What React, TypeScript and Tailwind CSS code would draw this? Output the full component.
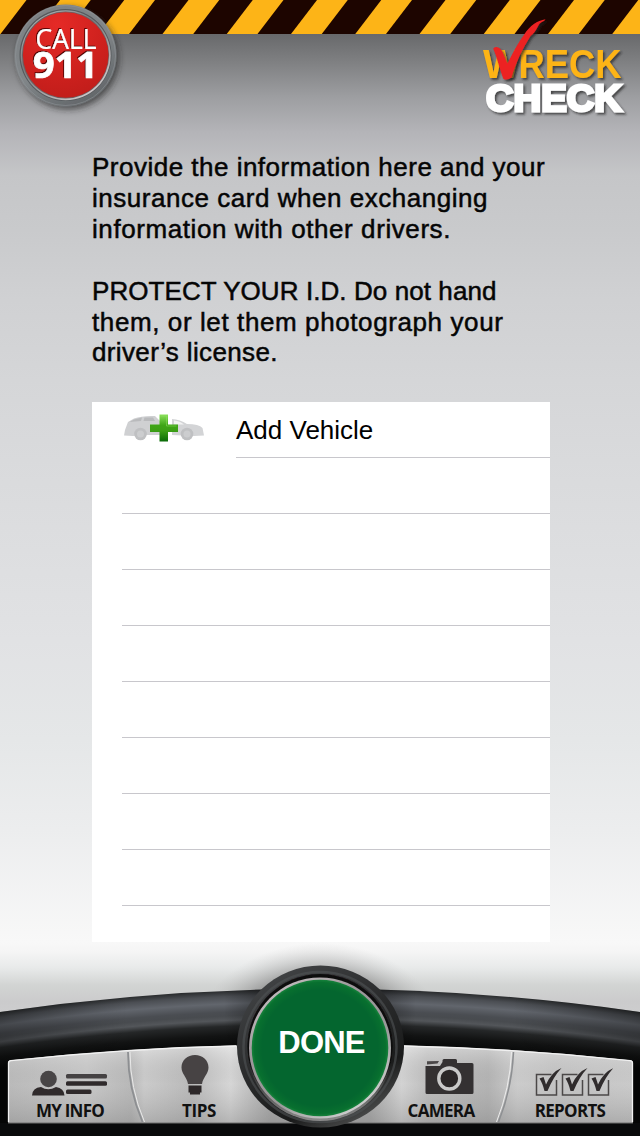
import type { ReactNode } from "react";

const stripes = Array.from({ length: 11 }, (_, i) => 0.5 + 64.25 * i);

function HazardTape() {
  return (
    <svg className="block h-[34px] w-full" viewBox="0 0 640 34" aria-hidden="true">
      <rect width="640" height="34" fill="#fdb417" />
      {stripes.map((x) => (
        <polygon key={x} points={`${x},34 ${x + 33.5},34 ${x + 59.5},0 ${x + 26},0`} fill="#1d0500" />
      ))}
    </svg>
  );
}

function EmergencyButton() {
  return (
    <button className="absolute left-1.5 top-0 h-[120px] w-[120px]" aria-label="Call 911">
      <svg className="block h-full w-full" viewBox="6 0 120 120">
        <defs>
          <linearGradient id="badgeRing" x1="0.2" y1="0" x2="0.8" y2="1">
            <stop offset="0" stopColor="#7d8184" />
            <stop offset="0.5" stopColor="#818689" />
            <stop offset="1" stopColor="#5e6265" />
          </linearGradient>
          <linearGradient id="badgeRim" x1="0.1" y1="0" x2="0.8" y2="1">
            <stop offset="0" stopColor="#b9bcbe" />
            <stop offset="0.4" stopColor="#777b7e" />
            <stop offset="1" stopColor="#d6cfd0" />
          </linearGradient>
          <radialGradient id="badgeRed" cx="0.4" cy="0.15" r="0.9">
            <stop offset="0" stopColor="#e52a26" />
            <stop offset="0.6" stopColor="#cf211e" />
            <stop offset="1" stopColor="#c01d1a" />
          </radialGradient>
          <filter id="badgeShadow" x="-20%" y="-20%" width="150%" height="150%">
            <feDropShadow dx="2.5" dy="3" stdDeviation="3" floodColor="#222" floodOpacity="0.65" />
          </filter>
          <filter id="badgeText" x="-10%" y="-10%" width="130%" height="130%">
            <feDropShadow dx="-1" dy="-1" stdDeviation="0.4" floodColor="#4a0000" floodOpacity="0.9" />
          </filter>
        </defs>
        <circle cx="65.5" cy="55.5" r="51" fill="url(#badgeRing)" filter="url(#badgeShadow)" />
        <circle cx="65.5" cy="55.5" r="50" fill="none" stroke="#94989b" strokeWidth="1" opacity="0.5" />
        <circle cx="65.5" cy="55" r="46" fill="#55595c" />
        <circle cx="65.7" cy="55.2" r="45" fill="url(#badgeRim)" />
        <circle cx="65.5" cy="55" r="43.6" fill="#6b5e60" />
        <circle cx="65.7" cy="55" r="42.8" fill="url(#badgeRed)" />
        <g fill="#fff" fontFamily="'Open Sans', sans-serif" filter="url(#badgeText)">
          <text x="35.5" y="49" fontSize="26.5" fontWeight="400" textLength="61" lengthAdjust="spacingAndGlyphs" stroke="#fff" strokeWidth="0.2">CALL</text>
          <text x="33" y="78.300" fontSize="35.5" fontWeight="700" textLength="65" lengthAdjust="spacingAndGlyphs" stroke="#fff" strokeWidth="0.7">911</text>
        </g>
      </svg>
    </button>
  );
}

function Logo() {
  return (
    <svg className="absolute left-[476px] top-3 h-[112px] w-[156px] overflow-visible" viewBox="476 12 156 112" role="img" aria-label="Wreck Check">
      <defs>
        <filter id="logoShadow" x="-10%" y="-10%" width="125%" height="130%">
          <feDropShadow dx="1.8" dy="2" stdDeviation="1.2" floodColor="#222" floodOpacity="0.7" />
        </filter>
      </defs>
      <g fontFamily="'Liberation Sans', Arial, sans-serif" fontWeight="700" filter="url(#logoShadow)">
        <text y="78" fontSize="41.500" fill="#fdb417">
          <tspan x="483" textLength="37" lengthAdjust="spacingAndGlyphs">W</tspan>
          <tspan x="518.500" textLength="103" lengthAdjust="spacingAndGlyphs">RECK</tspan>
        </text>
        <text x="486" y="111" fontSize="37.5" fill="#fff" stroke="#fff" strokeWidth="3" textLength="136" lengthAdjust="spacingAndGlyphs">CHECK</text>
      </g>
      <path d="M493.200 48.500Q496.500 45.500 500.500 49C503.500 52.500 505 59 507.500 63.500C512 54 518 43 524.500 34C530 26 537 20.500 545.500 19.300C544 22 540 22 538.200 26C535.500 31 533.500 34 530.500 36C523 48 515.500 63 511.500 77.500Q508 80.500 503.500 79C500 70 497 57 493.200 48.500Z" fill="#ed2024" filter="url(#logoShadow)" />
    </svg>
  );
}

function AddVehicleIcon() {
  return (
    <svg className="ml-[30px] mt-[10px] h-[32px] w-[84px]" viewBox="122 412 84 32" aria-hidden="true">
      <defs>
        <linearGradient id="plusGreen" x1="0" y1="0" x2="0" y2="1">
          <stop offset="0" stopColor="#8ae05a" />
          <stop offset="0.4" stopColor="#3fa516" />
          <stop offset="0.6" stopColor="#3c9f15" />
          <stop offset="1" stopColor="#0a6a08" />
        </linearGradient>
      </defs>
      <path d="M124 435.500L125 430L128 422Q130 420.500 134 418.500Q142 415.500 155 416L160 421V435H146L133 436Z" fill="#cfd0d2" />
      <path d="M129.500 422L134 419.500L142 417.500L141 421Z M144.500 417.500H153L155 421H143.500Z" fill="#b9babc" />
      <path d="M172 419Q180 419.500 187 424Q199 424 202.500 428L204 435.500L194 436L172 435V419Z" fill="#d3d4d6" />
      <path d="M174 420.500Q180 421 184 424.500H174Z" fill="#f3f3f3" />
      <circle cx="140.500" cy="434" r="6.300" fill="#bfc0c2" />
      <circle cx="140.500" cy="434" r="3.500" fill="#cccdcf" />
      <circle cx="187" cy="434" r="6.300" fill="#bfc0c2" />
      <circle cx="187" cy="434" r="3.500" fill="#cccdcf" />
      <path d="M159.500 414.500H168V424.500H178V432H168V441.500H159.500V432H150V424.500H159.500Z" fill="url(#plusGreen)" />
      <path d="M161 416H166.500V426H176.500" fill="none" stroke="#8fe060" strokeWidth="1" opacity="0.5" />
    </svg>
  );
}

function Console() {
  return (
    <svg className="absolute inset-0 h-full w-full" viewBox="0 942 640 194" aria-hidden="true">
      <defs>
        <linearGradient id="haze" x1="0" y1="0" x2="0" y2="1">
          <stop offset="0" stopColor="#f8f8f8" />
          <stop offset="0.12" stopColor="#f5f5f5" />
          <stop offset="0.32" stopColor="#e8eaea" />
          <stop offset="0.54" stopColor="#d2d4d3" />
          <stop offset="0.75" stopColor="#cbcbcc" />
          <stop offset="1" stopColor="#cfcfd0" />
        </linearGradient>
        <radialGradient id="glow" gradientUnits="userSpaceOnUse" cx="320" cy="1046" r="103" gradientTransform="translate(320 0) scale(1.25 1) translate(-320 0)">
          <stop offset="0.7" stopColor="#777" stopOpacity="0.6" />
          <stop offset="0.85" stopColor="#999" stopOpacity="0.3" />
          <stop offset="1" stopColor="#bbb" stopOpacity="0" />
        </radialGradient>
        <radialGradient id="arc" gradientUnits="userSpaceOnUse" cx="320" cy="3226" r="2237">
          <stop offset="0.9750" stopColor="#060707" />
          <stop offset="0.9800" stopColor="#121313" />
          <stop offset="0.9842" stopColor="#252728" />
          <stop offset="0.9868" stopColor="#53565a" />
          <stop offset="0.9888" stopColor="#484b4f" />
          <stop offset="0.9905" stopColor="#4a4d52" />
          <stop offset="0.9942" stopColor="#62666d" />
          <stop offset="0.9975" stopColor="#4b4e53" />
          <stop offset="1" stopColor="#2a2c2e" />
        </radialGradient>
        <linearGradient id="sideShade" x1="0" y1="0" x2="1" y2="0">
          <stop offset="0" stopColor="#000" stopOpacity="0.3" />
          <stop offset="0.2" stopColor="#000" stopOpacity="0" />
          <stop offset="0.35" stopColor="#000" stopOpacity="0" />
          <stop offset="0.42" stopColor="#000" stopOpacity="0.4" />
          <stop offset="0.58" stopColor="#000" stopOpacity="0.4" />
          <stop offset="0.65" stopColor="#000" stopOpacity="0" />
          <stop offset="0.8" stopColor="#000" stopOpacity="0" />
          <stop offset="1" stopColor="#000" stopOpacity="0.3" />
        </linearGradient>
        <linearGradient id="steelLeft" gradientUnits="userSpaceOnUse" x1="8" y1="0" x2="270" y2="0">
          <stop offset="0" stopColor="#bababa" />
          <stop offset="0.3" stopColor="#c8c8c8" />
          <stop offset="0.47" stopColor="#b8b8b8" />
          <stop offset="0.52" stopColor="#cbcbcb" />
          <stop offset="0.7" stopColor="#b9b9b9" />
          <stop offset="0.85" stopColor="#d6d6d6" />
          <stop offset="1" stopColor="#aaa" />
        </linearGradient>
        <linearGradient id="steelRight" gradientUnits="userSpaceOnUse" x1="633" y1="0" x2="370" y2="0">
          <stop offset="0" stopColor="#cacaca" />
          <stop offset="0.3" stopColor="#c4c4c4" />
          <stop offset="0.44" stopColor="#cccccc" />
          <stop offset="0.55" stopColor="#b3b3b3" />
          <stop offset="0.78" stopColor="#bdbdbd" />
          <stop offset="0.88" stopColor="#d3d3d3" />
          <stop offset="1" stopColor="#aaa" />
        </linearGradient>
        <linearGradient id="steelShade" x1="0" y1="0" x2="0" y2="1">
          <stop offset="0" stopColor="#fff" stopOpacity="0.4" />
          <stop offset="0.5" stopColor="#999" stopOpacity="0" />
          <stop offset="1" stopColor="#777" stopOpacity="0.35" />
        </linearGradient>
        <linearGradient id="bezel" x1="0.1" y1="0" x2="0.7" y2="1">
          <stop offset="0" stopColor="#454749" />
          <stop offset="0.45" stopColor="#2c2d2e" />
          <stop offset="0.8" stopColor="#1a1b1b" />
          <stop offset="1" stopColor="#4c4d4d" />
        </linearGradient>
        <linearGradient id="chrome" x1="0.1" y1="0" x2="0.8" y2="1">
          <stop offset="0" stopColor="#cdc6c9" />
          <stop offset="0.35" stopColor="#9c979a" />
          <stop offset="0.65" stopColor="#999" />
          <stop offset="1" stopColor="#d8d8d8" />
        </linearGradient>
        <linearGradient id="chromeLow" x1="0" y1="0" x2="0" y2="1">
          <stop offset="0.6" stopColor="#8a8a8a" stopOpacity="0" />
          <stop offset="1" stopColor="#8a8a8a" />
        </linearGradient>
        <radialGradient id="green" cx="0.5" cy="0.5" r="0.5">
          <stop offset="0.85" stopColor="#04662f" />
          <stop offset="0.96" stopColor="#08702f" />
          <stop offset="1" stopColor="#17823c" />
        </radialGradient>
        <filter id="soften" x="-5%" y="-5%" width="110%" height="110%">
          <feGaussianBlur stdDeviation="0.7" />
        </filter>
      </defs>
      <rect y="942" width="640" height="80" fill="url(#haze)" />
      <rect x="180" y="943" width="280" height="60" fill="url(#glow)" />
      <path d="M0 1012A2237 2237 0 0 1 640 1012V1136H0Z" fill="url(#arc)" />
      <path d="M0 1012A2237 2237 0 0 1 640 1012V1136H0Z" fill="url(#sideShade)" />
      <rect y="1123" width="640" height="13" fill="#090a0b" />
      <path d="M8 1123V1063Q8 1060.500 11 1060.200Q124 1048 236 1045.500L320 1045V1123Z" fill="url(#steelLeft)" />
      <path d="M8 1123V1063Q8 1060.500 11 1060.200Q124 1048 236 1045.500L320 1045V1123Z" fill="url(#steelShade)" />
      <path d="M8.500 1122V1063Q8.500 1061 11 1060.700Q124 1048.500 236 1046" fill="none" stroke="#f1f1f1" strokeWidth="1.3" />
      <path d="M633 1123V1063Q633 1060.500 630 1060.200Q517 1048 404 1045.500L320 1045V1123Z" fill="url(#steelRight)" />
      <path d="M633 1123V1063Q633 1060.500 630 1060.200Q517 1048 404 1045.500L320 1045V1123Z" fill="url(#steelShade)" />
      <path d="M632.500 1122V1063Q632.500 1061 630 1060.700Q517 1048.500 404 1046" fill="none" stroke="#f1f1f1" strokeWidth="1.3" />
      <path d="M128 1052Q128 1088 142.500 1122" fill="none" stroke="#8d8f92" strokeWidth="1.800" />
      <path d="M130 1052Q130 1088 144.500 1122" fill="none" stroke="#e9e9e9" strokeWidth="1" />
      <path d="M513.500 1052Q512 1088 498.500 1122" fill="none" stroke="#8d8f92" strokeWidth="1.500" />
      <path d="M511.500 1052Q510 1088 496.500 1122" fill="none" stroke="#ededed" strokeWidth="1" />
      <path d="M8 1123H633" stroke="#6f6f6f" strokeWidth="1.200" />
      <ellipse cx="320.500" cy="1046.500" rx="83.500" ry="81" fill="url(#bezel)" />
      <ellipse cx="320" cy="1047" rx="76.500" ry="75" fill="none" stroke="#505254" strokeWidth="2.500" opacity="0.6" filter="url(#soften)" />
      <ellipse cx="320" cy="1046" rx="72.500" ry="72" fill="#0d0a0b" filter="url(#soften)" />
      <ellipse cx="320" cy="1050" rx="72" ry="71" fill="url(#chromeLow)" />
      <ellipse cx="320" cy="1048" rx="71" ry="70.500" fill="url(#chrome)" />
      <circle cx="320" cy="1048" r="68.300" fill="url(#green)" />
    </svg>
  );
}

function NavItem({ label, className, labelClass, children }: { label: string; className: string; labelClass: string; children: ReactNode }) {
  return (
    <button className={`flex h-[71px] flex-col items-center justify-end ${className}`}>
      {children}
      <span className={`mt-1 block whitespace-nowrap font-['Open_Sans',sans-serif] text-[17px] font-bold leading-[22px] text-[#111] ${labelClass}`}>{label}</span>
    </button>
  );
}

function InfoIcon() {
  return (
    <svg className="h-[42px] w-[78px]" viewBox="31 1053 78 42" aria-hidden="true">
      <g fill="#2f2a2b">
        <circle cx="48.500" cy="1078" r="8.300" fill="#484546" />
        <path d="M32 1094.500Q32.500 1086.500 41 1086Q48 1090.500 56 1086Q64 1087 64.500 1094.500Z" />
        <rect x="66" y="1073" width="41" height="4.500" rx="1.500" fill="#454243" />
        <rect x="66" y="1080.300" width="41" height="4.500" rx="1.500" />
        <rect x="66" y="1088.500" width="25.500" height="4.500" rx="1.500" />
      </g>
    </svg>
  );
}

function BulbIcon() {
  return (
    <svg className="mr-2 h-[42px] w-[32px]" viewBox="179 1054 32 42" aria-hidden="true">
      <path d="M195 1055C202.500 1055 208.500 1060 208.500 1067.500C208.500 1074 203 1077 202 1084H188C187 1077 181.500 1074 181.500 1067.500C181.500 1060 187.500 1055 195 1055Z" fill="#474344" />
      <path d="M188.500 1085.500H201.500V1092.500H200V1094.500H190V1092.500H188.500Z" fill="#2d2829" />
    </svg>
  );
}

function CameraIcon() {
  return (
    <svg className="ml-4 h-[42px] w-[52px]" viewBox="423 1054 52 42" aria-hidden="true">
      <path d="M425.500 1066H440L442.500 1062V1060.500Q442.500 1059 444 1059H455.500Q457 1059 457 1060.500V1063H472Q473.500 1063 473.500 1064.500V1092.500Q473.500 1094 472 1094H427Q425.500 1094 425.500 1092.500Z" fill="#343132" />
      <path d="M427 1061.300L439 1061L437.500 1063.500L427 1064.500Z" fill="#4b4849" />
      <circle cx="449.300" cy="1078.500" r="10.500" fill="#2b2728" stroke="#c9c9c9" strokeWidth="3.400" />
    </svg>
  );
}

function ReportsIcon() {
  return (
    <svg className="ml-1.5 h-[42px] w-[80px]" viewBox="533 1053 80 42" aria-hidden="true">
      {[536.5, 562.500, 588.500].map((x) => (
        <g key={x}>
          <path d={`M${x + 15} 1073.500H${x}V1094H${x + 20}V1079`} fill="none" stroke="#4b4848" strokeWidth="1.500" />
          <path d={`M${x + 3} 1077.500L${x + 7} 1076Q${x + 8.500} 1080 ${x + 9.500} 1083.500Q${x + 15} 1071 ${x + 25} 1067Q${x + 17} 1075.500 ${x + 11} 1090H${x + 8}Q${x + 6} 1082 ${x + 3} 1077.500Z`} fill="#302c2d" />
        </g>
      ))}
    </svg>
  );
}

export default function App() {
  return (
    <main className="relative flex h-[1136px] w-[640px] flex-col overflow-hidden bg-[linear-gradient(to_bottom,#68696b_34px,#7f8082_62px,#9d9ea1_97px,#b4b4b8_132px,#c5c6c8_175px,#c9cacc_230px,#d0d1d3_300px,#d5d6d8_380px,#d9dadc_460px,#e1e2e4_640px,#e5e7e8_740px,#ecedee_830px,#f8f8f8_942px)] font-['Liberation_Sans',Arial,sans-serif]">
      <header className="h-[152px] shrink-0">
        <HazardTape />
        <EmergencyButton />
        <Logo />
      </header>
      <section className="ml-[92px] h-[250px] shrink-0 whitespace-nowrap text-[26px] leading-[30.9px] text-[#050505] [-webkit-text-stroke:0.5px_#050505]">
        <p>
          <span className="block tracking-[0.49px]">Provide the information here and your</span>
          <span className="block tracking-[0.53px]">insurance card when exchanging</span>
          <span className="block tracking-[0.58px]">information with other drivers.</span>
        </p>
        <p className="mt-[30.9px]">
          <span className="block tracking-[0.08px]">PROTECT YOUR I.D. Do not hand</span>
          <span className="block tracking-[0.6px]">them, or let them photograph your</span>
          <span className="block tracking-[0.36px]">driver’s license.</span>
        </p>
      </section>
      <section className="ml-[92px] h-[540px] w-[458px] shrink-0 overflow-hidden bg-white">
        <button className="flex h-14 w-full text-left">
          <AddVehicleIcon />
          <span className="ml-[30px] flex h-14 flex-1 items-center border-b border-[#c8c7cc] text-[26px] leading-none text-black">Add Vehicle</span>
        </button>
        {Array.from({ length: 8 }, (_, i) => (
          <div key={i} className="ml-[30px] h-14 border-b border-[#c8c7cc]" />
        ))}
      </section>
      <footer className="relative h-[194px] shrink-0">
        <Console />
        <nav className="relative flex h-full items-start pt-[109px]">
          <NavItem label="MY INFO" className="ml-2 w-[124px]" labelClass="tracking-[-0.75px]"><InfoIcon /></NavItem>
          <NavItem label="TIPS" className="w-[134px]" labelClass="tracking-[-0.4px]"><BulbIcon /></NavItem>
          <button className="mt-[-78px] flex h-[140px] w-[109px] items-center justify-center pl-0.5 text-[31px] font-bold tracking-[-0.8px] text-white">DONE</button>
          <NavItem label="CAMERA" className="w-[132px]" labelClass="tracking-[-0.7px]"><CameraIcon /></NavItem>
          <NavItem label="REPORTS" className="w-[126px]" labelClass="tracking-[-0.7px]"><ReportsIcon /></NavItem>
        </nav>
      </footer>
    </main>
  );
}
